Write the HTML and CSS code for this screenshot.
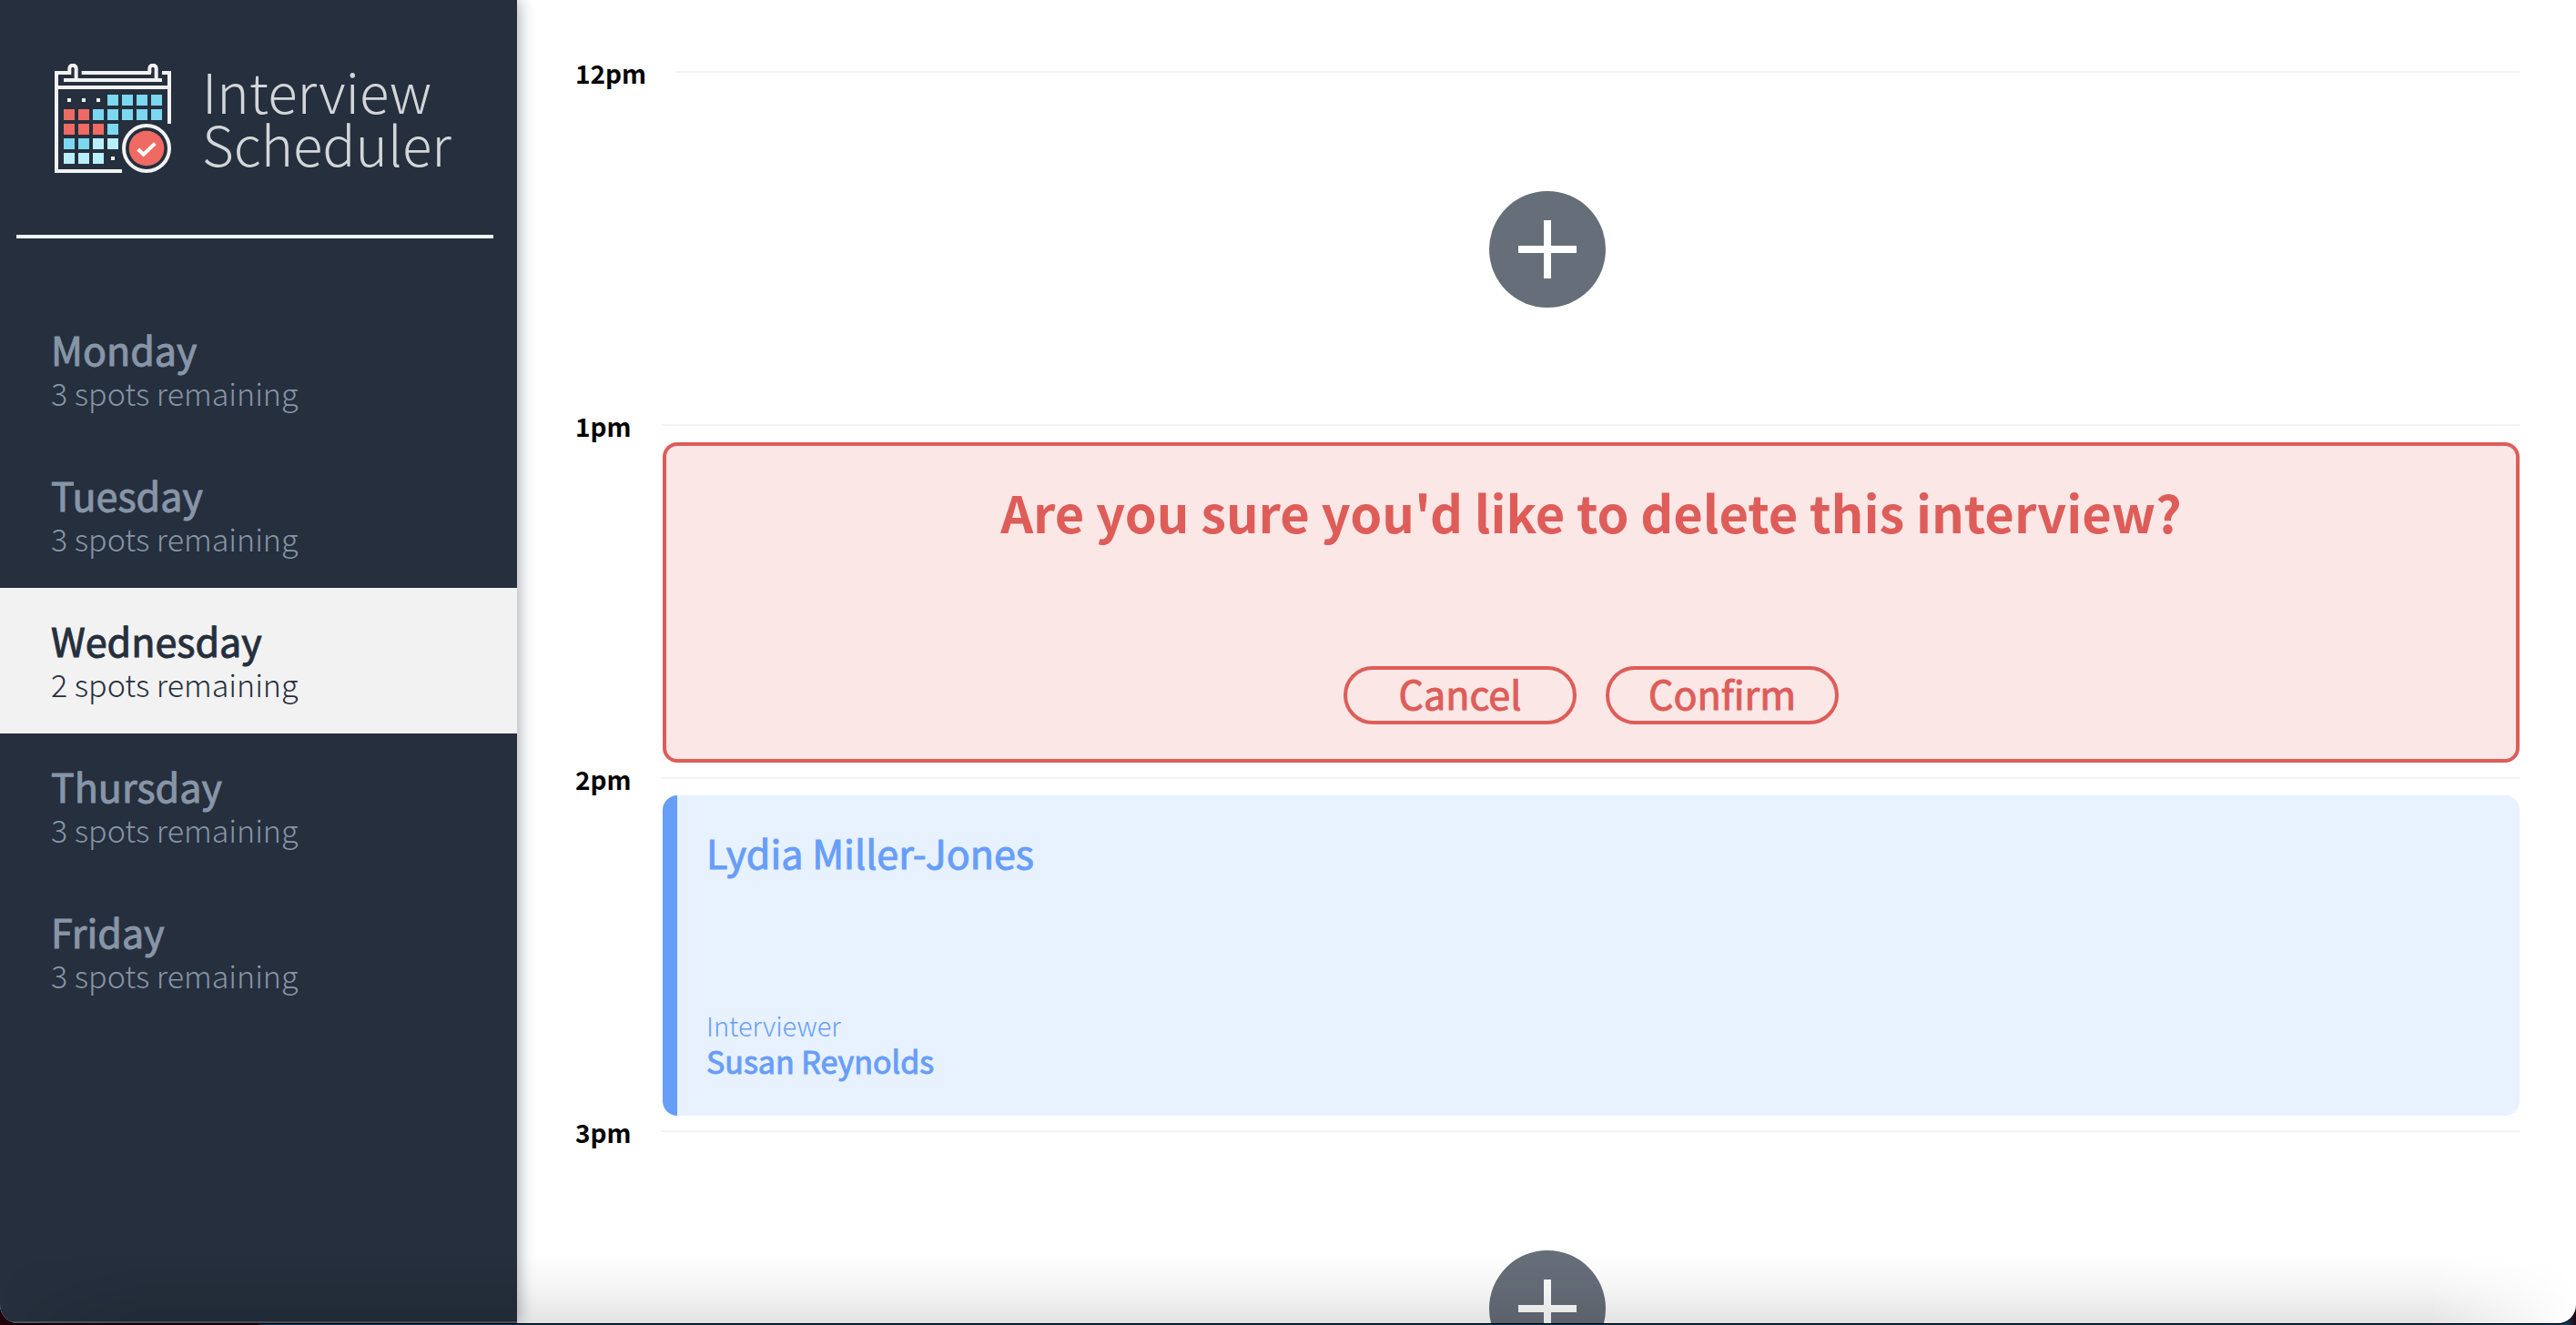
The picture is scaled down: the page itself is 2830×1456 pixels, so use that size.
FILE: index.html
```html
<!DOCTYPE html>
<html lang="en">
<head>
<meta charset="utf-8">
<title>Interview Scheduler</title>
<link rel="stylesheet" href="styles.css">
</head>
<body>
<div class="window">
  <aside class="sidebar">
    <div class="logo">
      <svg class="logo-icon" viewBox="60 30 384 360" aria-hidden="true">
        <g fill="none" stroke="#f2f2f2" stroke-width="12">
          <path d="M131 79V46a11 11 0 0 0-22 0V60H66V384H282"/>
          <path d="M395 79V46a11 11 0 0 0-22 0V60M149 60H378"/>
          <path d="M414 60H438V228M90 84H414M66 108H438"/>
          <circle cx="363" cy="309" r="75"/>
        </g>
        <g fill="#f2f2f2"><path d="M102 144h12v12h-12zM150 144h12v12h-12zM198 144h12v12h-12zM246 336h12v12h-12z"/></g>
        <path fill="#7cd7f0" d="M234 132h36v36h-36zM282 132h36v36h-36zM330 132h36v36h-36zM378 132h36v36h-36zM186 180h36v36h-36zM234 180h36v36h-36zM282 180h36v36h-36zM330 180h36v36h-36zM378 180h36v36h-36zM234 228h36v36h-36zM90 276h36v36h-36zM138 276h36v36h-36z"/>
        <path fill="#ee6a62" d="M90 180h36v36h-36zM138 180h36v36h-36zM90 228h36v36h-36zM138 228h36v36h-36zM186 228h36v36h-36z"/>
        <path fill="#b8effb" d="M186 276h36v36h-36zM234 276h36v36h-36zM90 324h36v36h-36zM138 324h36v36h-36zM186 324h36v36h-36z"/>
        <circle cx="363" cy="309" r="58" fill="#ee6a62"/>
        <path fill="none" stroke="#fff" stroke-width="12" d="M335 312L353 329L391 293"/>
      </svg>
      <span class="logo-text">Interview<br>Scheduler</span>
    </div>
    <hr class="divider">
    <nav>
      <ul class="days">
        <li><button class="day"><span class="day-name">Monday</span><span class="day-spots">3 spots remaining</span></button></li>
        <li><button class="day"><span class="day-name">Tuesday</span><span class="day-spots">3 spots remaining</span></button></li>
        <li><button class="day day-selected"><span class="day-name">Wednesday</span><span class="day-spots">2 spots remaining</span></button></li>
        <li><button class="day"><span class="day-name">Thursday</span><span class="day-spots">3 spots remaining</span></button></li>
        <li><button class="day"><span class="day-name">Friday</span><span class="day-spots">3 spots remaining</span></button></li>
      </ul>
    </nav>
  </aside>
  <main class="schedule">
    <article>
      <header class="time"><h4>12pm</h4><hr></header>
      <div class="slot slot-empty"><button class="add" aria-label="Add interview"><svg viewBox="0 0 64 64"><path d="M32 0V64M0 32H64"/></svg></button></div>
    </article>
    <article>
      <header class="time"><h4>1pm</h4><hr></header>
      <div class="slot card confirm">
        <h1>Are you sure you'd like to delete this interview?</h1>
        <div class="actions"><button class="action">Cancel</button><button class="action">Confirm</button></div>
      </div>
    </article>
    <article>
      <header class="time"><h4>2pm</h4><hr></header>
      <div class="slot card booked">
        <h2>Lydia Miller-Jones</h2>
        <div class="interviewer"><h4>Interviewer</h4><h3>Susan Reynolds</h3></div>
      </div>
    </article>
    <article>
      <header class="time"><h4>3pm</h4><hr></header>
      <div class="slot slot-empty"><button class="add" aria-label="Add interview"><svg viewBox="0 0 64 64"><path d="M32 0V64M0 32H64"/></svg></button></div>
    </article>
  </main>
  <div class="shade"></div>
</div>
</body>
</html>
```
FILE: styles.css
```css
* { box-sizing: border-box; }
body, h1, h2, h3, h4, ul, hr { margin: 0; padding: 0; }
body {
  height: 100vh;
  overflow: hidden;
  background: linear-gradient(to right, #22040c 284px, #0d3a57 285px, #0d3a57 calc(100% - 10px), #22040c);
  font-family: "Noto Sans CJK SC", "Noto Sans", sans-serif;
  color: #000;
}
button { font: inherit; border: 0; background: none; padding: 0; cursor: pointer; }
hr { border: 0; }

.window {
  position: relative;
  display: flex;
  height: calc(100vh - 2px);
  overflow: hidden;
  background: #fff;
  border-radius: 0 0 20px 20px;
  box-shadow: 0 1px 0 #000;
}

.sidebar {
  flex: none;
  width: 568px;
  background: #252f3d;
  border-bottom: 2px solid #50575f;
  box-shadow: 2px 0 16px rgba(37, 47, 61, .4);
}
.logo {
  display: flex;
  align-items: center;
  gap: 34px;
  height: 258px;
  padding: 2px 60px 0;
}
.logo-icon { flex: none; width: 128px; height: 120px; }
.logo-text { padding-bottom: 4px; font-size: 60px; line-height: 58px; font-weight: 300; color: #d3d6d9; }
.divider { height: 4px; margin: 0 26px 64px 18px; background: #f0f1f4; }

.days { list-style: none; }
.day {
  display: flex;
  flex-direction: column;
  justify-content: center;
  width: 100%;
  height: 160px;
  padding: 2px 56px 0;
  text-align: left;
  color: #8795a8;
}
.day-selected { background: #f2f2f2; color: #252f3d; }
.day-name { font-size: 43px; line-height: 50px; font-weight: 400; }
.day-name, .action, .booked h2, .booked h3 { -webkit-text-stroke: 1px currentColor; }
.day-spots { font-size: 34px; line-height: 48px; font-weight: 300; }

.schedule { flex: 1; padding: 62px 62px 0 64px; overflow: hidden; }
.time { display: flex; gap: 32px; height: 36px; align-items: flex-start; }
.time h4 { font-size: 28px; line-height: 36px; }
.time hr { flex: 1; height: 2px; margin-top: 16px; background: #f3f3f3; }
.slot { height: 352px; }
.slot-empty { display: flex; align-items: center; justify-content: center; }
.add {
  display: flex;
  align-items: center;
  justify-content: center;
  width: 128px;
  height: 128px;
  border-radius: 50%;
  background: #666e79;
}
.add svg { width: 64px; height: 64px; stroke: #fff; stroke-width: 8; }
.card {
  display: flex;
  flex-direction: column;
  justify-content: space-between;
  margin-left: 96px;
  border-radius: 16px;
}
.confirm {
  align-items: center;
  padding: 34px 32px 38px;
  background: #fae7e6;
  border: 4px solid #de5d59;
  color: #de5d59;
}
.confirm h1 { font-size: 56px; line-height: 76px; }
.actions { display: flex; gap: 32px; }
.action {
  width: 256px;
  height: 64px;
  padding-bottom: 6px;
  border: 4px solid #de5d59;
  border-radius: 32px;
  color: #de5d59;
  font-size: 43px;
  line-height: 50px;
}
.booked {
  padding: 32px 32px 38px;
  border-left: 16px solid #679ef9;
  background: #e8f1fe;
  color: #679ef9;
}
.booked h2 { font-size: 43px; line-height: 60px; font-weight: 400; }
.interviewer h4 { font-size: 29px; line-height: 36px; font-weight: 300; }
.interviewer h3 { font-size: 34px; line-height: 44px; font-weight: 400; }

.shade {
  position: absolute;
  inset: auto 0 0;
  height: 76px;
  background: linear-gradient(to top, rgba(0, 0, 0, .11), rgba(0, 0, 0, .04) 50%, transparent);
  mask-image: linear-gradient(to right, transparent, #000 160px, #000 calc(100% - 160px), transparent);
  pointer-events: none;
}
```
